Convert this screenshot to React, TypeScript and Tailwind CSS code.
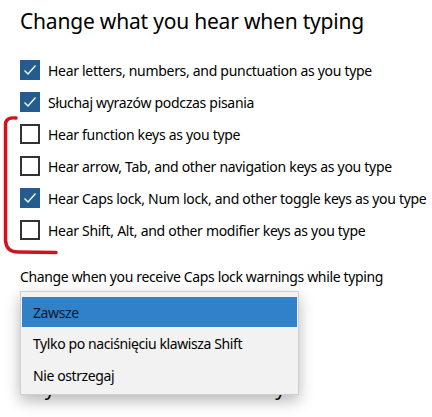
import React from "react";

const rows = [
  { label: "Hear letters, numbers, and punctuation as you type", checked: true },
  { label: "Słuchaj wyrazów podczas pisania", checked: true },
  { label: "Hear function keys as you type", checked: false },
  { label: "Hear arrow, Tab, and other navigation keys as you type", checked: false },
  { label: "Hear Caps lock, Num lock, and other toggle keys as you type", checked: true },
  { label: "Hear Shift, Alt, and other modifier keys as you type", checked: false },
];

const Box = ({ checked }: { checked: boolean }) =>
  checked ? (
    <span className="w-5 h-5 shrink-0 bg-[#245c8e] flex items-center justify-center">
      <svg width="16" height="16" viewBox="0 0 16 16" fill="none">
        <path d="M2.5 8.5 L6 12 L13.5 3.5" stroke="#fff" strokeWidth="1.3" />
      </svg>
    </span>
  ) : (
    <span className="w-5 h-5 shrink-0 border-2 border-[#333]" />
  );

const App = () => {
  return (
    <div className="relative w-[432px] h-[417px] overflow-hidden bg-white text-black font-['Noto_Sans',sans-serif]">
      {/* red annotation bracket */}
      <svg className="absolute left-0 top-0" width="432" height="417" fill="none">
        <path
          d="M16 118 Q6 117 5.5 124 L5.5 240 Q6 252 18 252 L56 252.5"
          stroke="#d4121e"
          strokeWidth="3.5"
          strokeLinecap="round"
        />
      </svg>

      <div className="pl-5 pt-[6px]">
        <h1 className="text-[21px] leading-[30px] tracking-[-0.2px]">Change what you hear when typing</h1>

        <div className="mt-[24px] flex flex-col gap-3">
          {rows.map((r) => (
            <label key={r.label} className="flex items-center gap-2 h-5 text-[14px] whitespace-nowrap">
              <Box checked={r.checked} />
              <span className="tracking-[-0.3px]">{r.label}</span>
            </label>
          ))}
        </div>

        <div className="relative mt-[27px]">
          <p className="text-[14px] leading-5 tracking-[-0.35px]">Change when you receive Caps lock warnings while typing</p>
          <div className="h-[87px]" />
          <p className="text-[20px] leading-7 tracking-[0.7px]">Key echo for Narrator only</p>

          {/* open dropdown */}
          <div className="absolute left-0 top-[24px] w-[279px] bg-[#f2f2f2] border border-[#cfcfcf] pt-[5px] pb-[3px] shadow-[0_6px_14px_rgba(0,0,0,0.28)] text-[14px] tracking-[-0.4px]">
            <div className="mx-[1px] h-[30px] bg-[#3181c8] flex items-center pl-[11px] text-[#0d1a2a]">Zawsze</div>
            <div className="h-8 flex items-center pl-3">Tylko po naciśnięciu klawisza Shift</div>
            <div className="h-8 flex items-center pl-3">Nie ostrzegaj</div>
          </div>
        </div>
      </div>
    </div>
  );
};

export default App;
